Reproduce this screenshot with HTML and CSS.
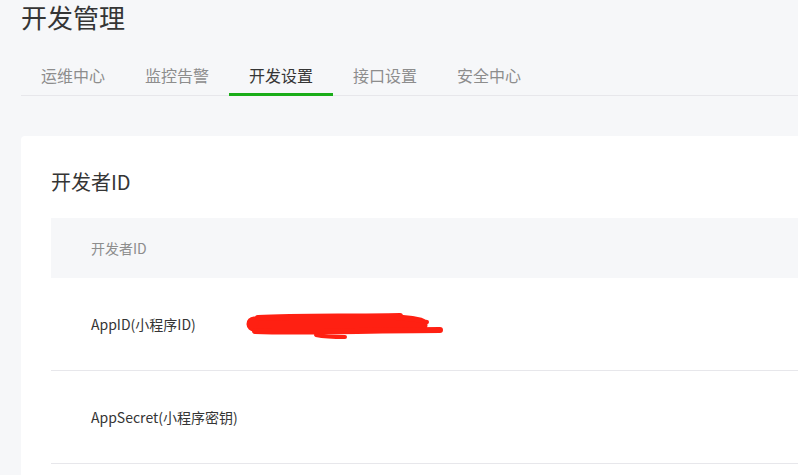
FILE: index.html
```html
<!DOCTYPE html>
<html lang="zh-CN">
<head>
<meta charset="utf-8">
<title>开发管理</title>
<link rel="stylesheet" href="styles.css">
</head>
<body>
<div class="page">
  <h1 class="title">开发管理</h1>
  <nav class="tabs">
    <a class="tab">运维中心</a>
    <a class="tab">监控告警</a>
    <a class="tab active">开发设置</a>
    <a class="tab">接口设置</a>
    <a class="tab">安全中心</a>
  </nav>
  <section class="card">
    <h2 class="card-title">开发者ID</h2>
    <div class="table">
      <div class="thead">开发者ID</div>
      <div class="row">
        <div class="label">AppID(小程序ID)</div>
        <div class="value">
          <svg class="redact" width="200" height="34" viewBox="0 0 200 34" aria-hidden="true">
            <g fill="none" stroke="#ff2012" stroke-linecap="round" stroke-linejoin="round">
              <path d="M8 17 C40 16 90 17 120 15 C140 14 160 15 174 18" stroke-width="15"/>
              <path d="M12 11 C50 9 100 10 154 9" stroke-width="6"/>
              <path d="M150 11 C162 12 172 13 181 15" stroke-width="4"/>
              <path d="M9 24 C60 26 120 23 194 23" stroke-width="6"/>
              <path d="M70 28 C80 30 90 30 99 30" stroke-width="4"/>
              <path d="M4 16 L10 16" stroke-width="6"/>
            </g>
          </svg>
        </div>
      </div>
      <div class="row">
        <div class="label">AppSecret(小程序密钥)</div>
        <div class="value"></div>
      </div>
    </div>
  </section>
</div>
</body>
</html>
```

FILE: styles.css
```css
html, body {
  margin: 0;
  padding: 0;
  overflow: hidden;
}
body {
  background: #f6f7f9;
  font-family: "Noto Sans CJK SC", "Noto Sans", sans-serif;
  color: #353535;
}
.page {
  width: 1000px;
  padding-left: 21px;
}
.title {
  margin: 0;
  padding-top: 2px;
  font-size: 26px;
  font-weight: 400;
  line-height: 30px;
  color: #353535;
}
.tabs {
  display: flex;
  margin-top: 23px;
  height: 40px;
  border-bottom: 1px solid #e7e7eb;
}
.tab {
  box-sizing: border-box;
  width: 104px;
  height: 41px;
  margin-bottom: -1px;
  padding-top: 1px;
  text-align: center;
  font-size: 16px;
  line-height: 38px;
  color: #8d8d8d;
  border-bottom: 3px solid transparent;
}
.tab.active {
  color: #353535;
  border-bottom-color: #1aad19;
}
.card {
  margin-top: 40px;
  background: #fff;
  border-radius: 4px;
  padding: 32px 30px 40px;
}
.card-title {
  margin: 0 0 22px;
  font-size: 20px;
  font-weight: 400;
  line-height: 28px;
  color: #353535;
}
.thead {
  height: 60px;
  line-height: 60px;
  padding-left: 40px;
  background: #f6f7f9;
  font-size: 14px;
  color: #8d8d8d;
}
.row {
  box-sizing: border-box;
  display: flex;
  align-items: center;
  height: 93px;
  padding-left: 40px;
  border-bottom: 1px solid #e7e7eb;
  font-size: 14px;
  color: #353535;
}
.label {
  width: 155px;
  flex: none;
}
.value {
  display: flex;
  align-items: center;
}
.redact {
  display: block;
}
```
